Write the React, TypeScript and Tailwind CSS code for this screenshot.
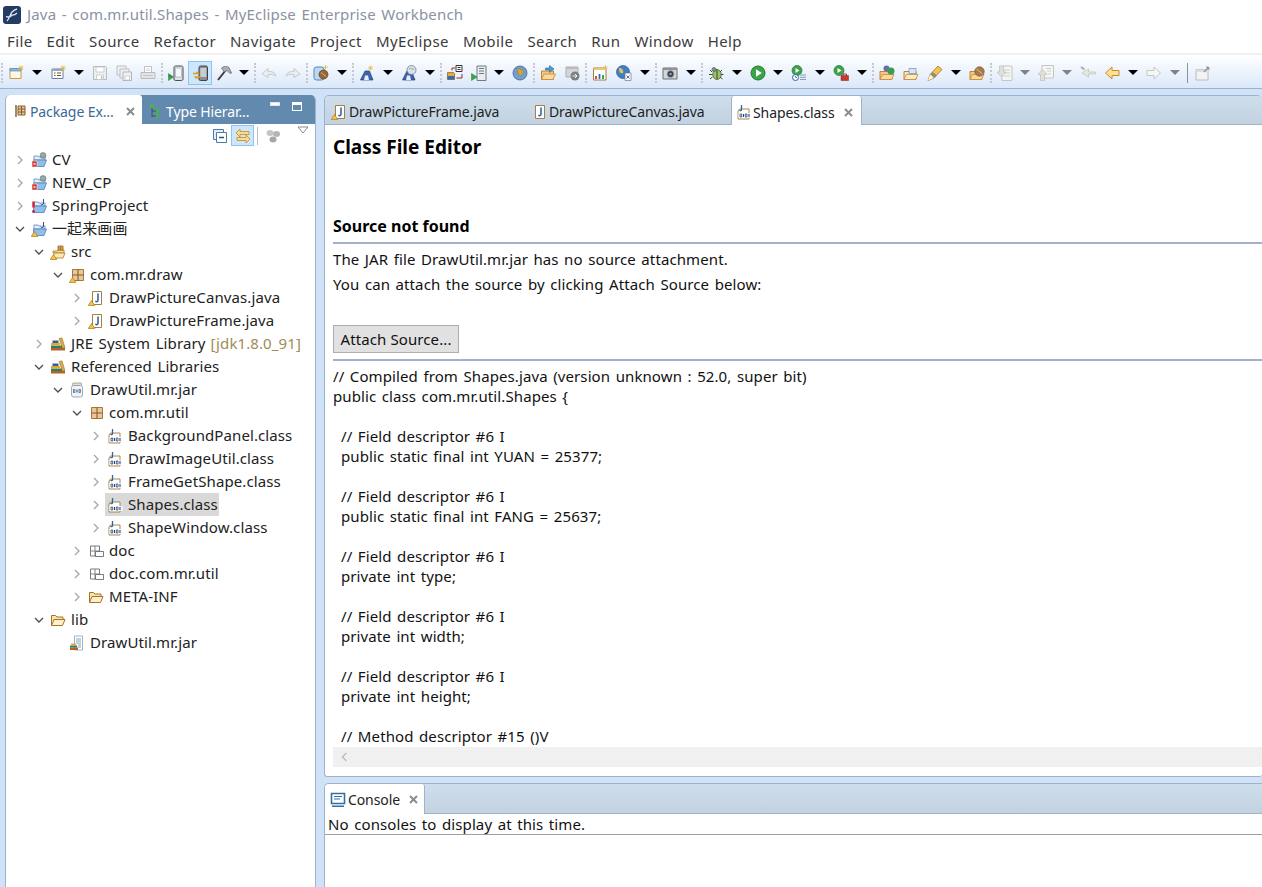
import React from "react";

const Svg = ({ children, className = "" }: { children: React.ReactNode; className?: string }) => (
  <svg viewBox="0 0 16 16" className={`w-4 h-4 shrink-0 ${className}`} fill="none">{children}</svg>
);

const Warn = () => <path d="M3.5 10.5 L6.8 15.5 H0.2 Z" fill="#f5c542" stroke="#b07a1c" strokeWidth="0.7" />;
const Err = () => <path d="M1 9h5v6H1z" fill="#d9342b" stroke="#fff" strokeWidth="0.5" />;

const OpenFolderBase = () => (
  <>
    <path d="M3 4h4l1 1h6v3H3z" fill="#e8eef8" stroke="#5b86b8" strokeWidth="0.8" />
    <path d="M2.500 8h13l-2.500 6.500H2.500z" fill="#8fc0ec" stroke="#4c7db5" strokeWidth="0.8" />
  </>
);
const ProjectWeb = () => (
  <Svg><OpenFolderBase /><circle cx="12" cy="3.5" r="3" fill="#6fa8d8" stroke="#8a6a2c" strokeWidth="0.5" /><path d="M10 3h4" stroke="#e0b040" strokeWidth="1" /><Err /><path d="M2.500 11l2 2m0-2l-2 2" stroke="#fff" strokeWidth="0.8" /></Svg>
);
const ProjectErr = () => (
  <Svg><OpenFolderBase /><path d="M12.500 1v5l-2 .8-1-1" stroke="#33528a" strokeWidth="1" /><path d="M2.500 3.500v6" stroke="#d9202a" strokeWidth="2.400" /><circle cx="2.500" cy="13.500" r="1.400" fill="#d9202a" /></Svg>
);
const ProjectWarn = () => (
  <Svg><OpenFolderBase /><path d="M12.500 1v5l-2 .8-1-1" stroke="#33528a" strokeWidth="1" /><Warn /></Svg>
);
const SrcFolder = () => (
  <Svg>
    <path d="M3 7h4l1-1h6v3H3z" fill="#f7dd9c" stroke="#ad7a22" strokeWidth="0.8" />
    <path d="M8 2h5v4H8z" fill="#f2bd6a" stroke="#8f5d1a" strokeWidth="0.8" />
    <path d="M10.500 2v4M8 4h5" stroke="#8f5d1a" strokeWidth="0.6" />
    <path d="M4 9h11l-2 5H3z" fill="#fbe9b8" stroke="#ad7a22" strokeWidth="0.8" /><Warn />
  </Svg>
);
const Pkg = ({ warn = false }: { warn?: boolean }) => (
  <Svg>
    <path d="M3.500 2.500h11v11h-11z" fill="#e9c79a" stroke="#a9773a" strokeWidth="1" />
    <path d="M9 2.500v11M3.500 8h11" stroke="#8c5c28" strokeWidth="1.100" />
    {warn && <Warn />}
  </Svg>
);
const JavaFile = ({ warn = false }: { warn?: boolean }) => (
  <Svg>
    <path d="M4.500 1.500h9v13h-9z" fill="#fff" stroke="#a3803f" strokeWidth="1" />
    <path d="M10 3.500v6.500c0 2-1.600 2-2.600 1.200" stroke="#2c5ba0" strokeWidth="1.500" />
    {warn && <Warn />}
  </Svg>
);
const ClassFile = () => (
  <Svg>
    <path d="M3.500 5h9.500v10h-11V7z" fill="#fff" stroke="#a57b3d" strokeWidth="0.900" />
    <path d="M5.500 1v4.500c0 1.300-1.200 1.300-2 .7" stroke="#33639c" strokeWidth="1.300" />
    <path d="M2.500 9.200h13v4.600h-13z" fill="#fff" />
    <path d="M4 10h1.700v3H4zM9.300 10h1.700v3H9.300z" stroke="#23467f" strokeWidth="0.800" />
    <path d="M7.500 10v3M13 10v3" stroke="#23467f" strokeWidth="1.100" />
  </Svg>
);
const JarIcon = () => (
  <Svg>
    <rect x="3.500" y="1" width="9" height="2.500" rx="1" fill="#e3ded2" stroke="#8d8774" strokeWidth="0.700" />
    <rect x="2.500" y="3.500" width="11" height="11.500" rx="2" fill="#eef3f7" stroke="#8c98a5" strokeWidth="0.800" />
    <path d="M4.500 7.500h1.400v3H4.500zM10 7.500h1.400v3H10z" stroke="#2f4d7c" strokeWidth="0.700" />
    <path d="M8 7.500v3" stroke="#2f4d7c" strokeWidth="1" />
  </Svg>
);
const Books = () => (
  <Svg>
    <path d="M1 12h14v2.500H1z" fill="#b3642a" />
    <path d="M1 9.500h11V12H1z" fill="#2d7f68" />
    <path d="M1 7h9v2.500H1z" fill="#e0a93a" />
    <path d="M9 2.500 L12 1.800 L15 11.800 L12.500 12.300z" fill="#d9ad45" stroke="#8a6520" strokeWidth="0.500" />
    <path d="M2.500 4.500h6V7h-6z" fill="#3b5c96" />
  </Svg>
);
const DocPkg = () => (
  <Svg>
    <path d="M2.500 3h9v10h-9z" fill="#fff" stroke="#77797b" strokeWidth="1" />
    <path d="M7 3v10M2.500 8h9" stroke="#77797b" strokeWidth="0.900" />
    <path d="M7.500 8.500h8v5h-8z" fill="#fff" stroke="#6a6c6e" strokeWidth="0.900" />
  </Svg>
);
const FolderIcon = () => (
  <Svg>
    <path d="M1.500 13.500V3.500h4l1.500 1.500h6v3" fill="#f8e3a8" stroke="#a8722a" strokeWidth="1" />
    <path d="M1.500 13.500 L4 7.500h11l-2.500 6z" fill="#fdf1cc" stroke="#a8722a" strokeWidth="1" />
  </Svg>
);
const JarFile = () => (
  <Svg>
    <path d="M5.500 1h8v14h-8z" fill="#fff" stroke="#8ba0b8" strokeWidth="0.800" />
    <path d="M7 4h5M7 6h5M7 8h5M9 10h3M9 12h3" stroke="#5e7fa8" strokeWidth="0.700" />
    <path d="M1 12.500h8V15H1z" fill="#b3642a" /><path d="M1 10.500h7v2H1z" fill="#2d7f68" /><path d="M2 8.500h5v2H2z" fill="#dfa93a" />
  </Svg>
);

/* ---------- toolbar icons ---------- */
const NewWin = () => <Svg><path d="M2 3.500h11v10H2z" fill="#fff8e4" stroke="#c99a44" strokeWidth="1" /><path d="M2 3.500h11v2.500H2z" fill="#8bb8e0" stroke="#5e8dbe" strokeWidth="0.700" /><path d="M13 .5v5M10.500 3h5M11 1l4 4M15 1l-4 4" stroke="#e7b93e" strokeWidth="0.800" /></Svg>;
const NewForm = () => <Svg><path d="M2 4h11v9.500H2z" fill="#fff" stroke="#6e7f95" strokeWidth="1" /><path d="M2 4h11v2H2z" fill="#8fa8c4" /><path d="M4 8h1.500M7 8h4M4 10.500h1.500M7 10.500h4" stroke="#7a4b20" strokeWidth="1" /><path d="M13 .5v5M10.500 3h5M11 1l4 4M15 1l-4 4" stroke="#e7b93e" strokeWidth="0.800" /></Svg>;
const Save = () => <Svg><path d="M1.500 1.500h12l1 1v12h-13z" fill="#eef0f2" stroke="#b6babd" strokeWidth="1" /><path d="M4 2h8v5H4zM4.500 10h7v4.500h-7z" fill="#fff" stroke="#c0c3c6" strokeWidth="0.800" /><path d="M9 11h1.500v3H9z" fill="#c0c3c6" /></Svg>;
const SaveAll = () => <Svg><path d="M1 1h9v9H1z" fill="#f0f1f2" stroke="#bbbec1" /><path d="M4 4h9v9H4z" fill="#f0f1f2" stroke="#bbbec1" /><path d="M7 7h8.500v8.500H7z" fill="#f0f1f2" stroke="#b2b6b9" /><path d="M9 11h4.500v4H9z" fill="#fff" stroke="#bbbec1" strokeWidth="0.700" /></Svg>;
const Print = () => <Svg><path d="M4.500 1.500h7v6h-7z" fill="#fff" stroke="#bfc1c3" /><path d="M1 7.500h14v6H1z" fill="#e3e3e3" stroke="#b9bbbd" /><path d="M3 10.500h10" stroke="#c6c8ca" /><path d="M6 4h4M6 5.500h4" stroke="#c9cbcd" strokeWidth="0.700" /></Svg>;
const Phone = () => <Svg><rect x="6" y="1" width="9" height="14.500" rx="1.500" fill="#dfe4ea" stroke="#4a4d52" strokeWidth="1" /><rect x="7.300" y="3" width="6.400" height="9" fill="#f4f7fb" stroke="#8d949d" strokeWidth="0.500" /><path d="M.5 8.500v7l5-3.500z" fill="#42a04a" stroke="#2a7c33" strokeWidth="0.500" /><path d="M.5 11h3" stroke="#2a7c33" /></Svg>;
const PhoneSync = () => <Svg><rect x="7" y="1" width="8.500" height="14.500" rx="1.500" fill="#8a8d92" stroke="#3f4247" strokeWidth="1" /><rect x="8.300" y="3" width="6" height="9" fill="#c8cdd4" /><path d="M1 8.500h5l-1.500-1.800M9 12H3.500L5 13.800" stroke="#e0a020" strokeWidth="1.600" /></Svg>;
const Hammer = () => <Svg><path d="M2 15 L9.500 5.500" stroke="#3a3c40" strokeWidth="2" /><path d="M5.500 3 C8 .8 11 1.300 13 2.500 L15.500 8 L14 8.500 L11 5.500 L8.500 7 Z" fill="#a9aeb4" stroke="#5c6066" strokeWidth="0.700" /></Svg>;
const Undo = () => <Svg><path d="M1 9 L7 3.500v3 C11 6.500 14 7 15 11 C13 9.500 10.500 9 7 9.500v3z" fill="#eceef0" stroke="#c0c4c8" strokeWidth="0.900" /></Svg>;
const Redo = () => <Svg><path d="M15 9 L9 3.500v3 C5 6.500 2 7 1 11 C3 9.500 5.500 9 9 9.500v3z" fill="#eceef0" stroke="#c0c4c8" strokeWidth="0.900" /></Svg>;
const Bean = () => <Svg><rect x="1" y="2" width="10" height="13" rx="2.500" fill="#bcd8f2" stroke="#4f86bd" strokeWidth="1" /><circle cx="10.500" cy="9.500" r="4.500" fill="#9a6636" stroke="#5d3a18" strokeWidth="0.700" /><path d="M8 7.500l5 4" stroke="#d6ad7c" /><path d="M12.500 0v4.500M10.500 2.200h4.500" stroke="#e7b93e" strokeWidth="0.800" /></Svg>;
const Arch = () => <Svg><path d="M1.500 15 L6 6 L10.500 6 L14 15z" fill="#3e63ad" stroke="#243f7a" strokeWidth="0.700" /><path d="M6 10.500h3l1 4.500H5z" fill="#e3eefa" /><path d="M11.500 .5v5M9 3h5M9.700 1.200l3.600 3.600M13.300 1.200l-3.600 3.600" stroke="#e7b93e" strokeWidth="0.700" /></Svg>;
const ArchGlobe = () => <Svg><path d="M1.500 15 L6 6 L10.500 6 L14 15z" fill="#3e63ad" stroke="#243f7a" strokeWidth="0.700" /><path d="M6 10.500h3l1 4.500H5z" fill="#e3eefa" /><circle cx="10.500" cy="5" r="4.500" fill="#d0e4f6" stroke="#6a6f78" strokeWidth="0.700" /><path d="M8 4c2-1.500 3 1 5 0" stroke="#caa233" /></Svg>;
const Deploy = () => <Svg><path d="M9 .5h6v6H9z" fill="#fff" stroke="#2e3338" /><path d="M10.500 2.500h3M10.500 4.500h3" stroke="#2e3338" /><path d="M.5 7.500h6l1 1v6H.5z" fill="#e8ab38" stroke="#8a5f14" strokeWidth="0.700" /><path d="M.5 11h7v3.500H.5z" fill="#3b6aa8" /><path d="M5 5.500V3h3M15 9v4H9.500" stroke="#8c2c2c" strokeWidth="1" /></Svg>;
const Server = () => <Svg><path d="M6 1h9v14.500H6z" fill="#e9edf0" stroke="#6f7a85" /><path d="M8 3.500h5M8 6h5M8 8.500h5" stroke="#6f7a85" strokeWidth="1.200" /><path d="M.5 8.500v7L6 12z" fill="#3ea24a" stroke="#2a7c33" strokeWidth="0.500" /></Svg>;
const Globe = () => <Svg><circle cx="8" cy="8" r="7" fill="#6f9fd4" stroke="#425f8f" strokeWidth="0.800" /><path d="M5 3c2 1 6 1 7 4-1 2-2 1-3 5-2-2-4-4-4-9z" fill="#d2a63c" stroke="#8a5f14" strokeWidth="0.400" /></Svg>;
const OpenFolderBlue = () => <Svg><path d="M1.500 14.500V6h12v8.500z" fill="#f6c886" stroke="#b57a2a" strokeWidth="0.900" /><path d="M1.500 14.500 L4 9h11.500l-2.500 5.500z" fill="#fbd89c" stroke="#c58a3a" strokeWidth="0.800" /><path d="M5.500 5V3h4V.5L14 4l-4.500 3.500V5z" fill="#4b9ad2" stroke="#2d6b9c" strokeWidth="0.600" /></Svg>;
const Undeploy = () => <Svg><path d="M2 2h12v10H2z" fill="#d5d6d8" stroke="#aeb0b2" /><path d="M2 2h12v2H2z" fill="#b9bbbe" /><circle cx="11" cy="11" r="4.500" fill="#7d8083" /><path d="M8.500 11h4.500m-2-2l2 2-2 2" stroke="#fff" strokeWidth="0.900" /></Svg>;
const Chart = () => <Svg><path d="M1.500 3h12.500v12H1.500z" fill="#fff" stroke="#a08040" /><path d="M1.500 3H14v2H1.500z" fill="#e8c77a" /><path d="M4 14v-3" stroke="#cc3c2a" strokeWidth="1.800" /><path d="M7.500 14v-5" stroke="#2a70c0" strokeWidth="1.800" /><path d="M11 14v-4" stroke="#2e9c44" strokeWidth="1.800" /><path d="M13.500 0v4.500M11.300 2.200h4.500" stroke="#e7b93e" strokeWidth="0.800" /></Svg>;
const GlobeDoc = () => <Svg><circle cx="7" cy="7" r="6.500" fill="#3f7fc4" stroke="#355a8c" strokeWidth="0.700" /><path d="M3 3c3 0 5 2 4 5-2 1-4 0-4-5z" fill="#e3c05c" /><path d="M9 8h6v7.500H9z" fill="#fff" stroke="#6f7a85" strokeWidth="0.700" /><path d="M10.500 10.500l3 3m0-3l-3 3" stroke="#3f5e96" strokeWidth="0.900" /></Svg>;
const Camera = () => <Svg><path d="M1 3h14v11H1z" fill="#d5d6d8" stroke="#6d7074" /><path d="M1 3h14v2H1z" fill="#8e9195" /><circle cx="8.500" cy="9" r="3.500" fill="#3a3d42" stroke="#a4a7aa" /><circle cx="8.500" cy="9" r="1.300" fill="#7ba6cc" /></Svg>;
const Bug = () => <Svg><ellipse cx="9" cy="9.500" rx="4.200" ry="5" fill="#9ec26c" stroke="#48601f" strokeWidth="0.800" /><circle cx="6" cy="4.500" r="2" fill="#6ea0a0" stroke="#344" strokeWidth="0.600" /><path d="M2 5l2 2M1 9.500h3.500M2 14l2.500-2M14 5l-2 2M15.500 9.500H13M14.500 14l-2.500-2M9 5v9" stroke="#2f3a1d" strokeWidth="0.900" /></Svg>;
const Run = () => <Svg><circle cx="8" cy="8" r="7" fill="#3da34a" stroke="#217a30" strokeWidth="1" /><path d="M6 4.200v7.600l5.800-3.800z" fill="#fff" /></Svg>;
const RunHist = () => <Svg><circle cx="6" cy="5.500" r="5" fill="#3da34a" stroke="#217a30" strokeWidth="0.700" /><path d="M4.500 3v5L8.500 5.500z" fill="#fff" /><circle cx="4.500" cy="12.500" r="3" fill="#fff" stroke="#2d5fa8" /><path d="M4.500 10.800v1.700h1.500" stroke="#2d5fa8" strokeWidth="0.800" /><path d="M9 10h6M9 12.300h6M9 14.500h6" stroke="#7f93ad" strokeWidth="0.900" /></Svg>;
const RunTool = () => <Svg><circle cx="6" cy="5.500" r="5" fill="#3da34a" stroke="#217a30" strokeWidth="0.700" /><path d="M4.500 3v5L8.500 5.500z" fill="#fff" /><path d="M8 10.500h7.500v5H8z" fill="#c9382c" stroke="#8a221a" strokeWidth="0.500" /><path d="M10 10.500V9h3.500v1.500" stroke="#6a1d17" strokeWidth="0.800" /></Svg>;
const FolderGreen = () => <Svg><path d="M1 14.500V6.500h12v8z" fill="#f6c886" stroke="#b57a2a" strokeWidth="0.900" /><path d="M1 14.500 L3.500 9.500H15l-2.500 5z" fill="#fbd89c" stroke="#c58a3a" strokeWidth="0.800" /><circle cx="7.500" cy="3.500" r="3" fill="#6272a8" /><circle cx="12" cy="6" r="3.500" fill="#3d9a50" /></Svg>;
const FolderWin = () => <Svg><path d="M1 14.500V6.500h12v8z" fill="#f6e2bc" stroke="#b57a2a" strokeWidth="0.900" /><path d="M1 14.500 L3.500 9.500H15l-2.500 5z" fill="#fbeac8" stroke="#c58a3a" strokeWidth="0.800" /><path d="M6 3.500h7v5H6z" fill="#d8e6f4" stroke="#7d98b8" strokeWidth="0.800" /></Svg>;
const Pen = () => <Svg><path d="M1 15.500l2-6 8-8.500 4 3.500L7 13z" fill="#f5c24f" stroke="#a8722a" strokeWidth="0.800" /><path d="M6 7l4 3.500L7.500 13 3.500 9.500z" fill="#8a8d91" /><path d="M1 15.500l2-6 3.500 3.500z" fill="#fff6d8" /></Svg>;
const FolderBean = () => <Svg><path d="M1 14.500V6.500h12v8z" fill="#f6c886" stroke="#b57a2a" strokeWidth="0.900" /><path d="M1 14.500 L3.500 9.500H15l-2.500 5z" fill="#fbd89c" stroke="#c58a3a" strokeWidth="0.800" /><circle cx="10.500" cy="6.500" r="4.700" fill="#a97a4a" stroke="#6a4620" strokeWidth="0.600" /><path d="M7.500 4l6 5" stroke="#dcbf94" /></Svg>;
const NextAnn = () => <Svg><path d="M5 1h10v14.500H5z" fill="#f5f6f4" stroke="#c3c6c2" /><path d="M7 5h6M7 8h6M7 11h6" stroke="#ccd0cc" /><path d="M2.500 1h4v6h2.500L4.500 12 0 7h2.500z" fill="#e0e0d8" stroke="#bcbfb8" strokeWidth="0.700" /></Svg>;
const PrevAnn = () => <Svg><path d="M4 .5h11.500V13H4z" fill="#f5f6f4" stroke="#c3c6c2" /><path d="M8 3.500h5M9 6h4M10 9h3" stroke="#ccd0cc" /><path d="M2.500 15.500h4v-6H9L4.500 4.500 0 9.500h2.500z" fill="#e0e0d8" stroke="#bcbfb8" strokeWidth="0.700" /></Svg>;
const LastEdit = () => <Svg><path d="M15.500 9H8.500v3L2 8l6.500-4v3h7z" fill="#e6e9e0" stroke="#bcc0b8" strokeWidth="0.700" /><path d="M1 2l3.500 2.500" stroke="#a4a6aa" strokeWidth="1.600" /></Svg>;
const BackA = () => <Svg><path d="M15 5.500H8V2L1.500 8 8 14v-3.500h7z" fill="#fbe29c" stroke="#cf8a1a" strokeWidth="1" /></Svg>;
const FwdA = () => <Svg><path d="M1 5.500h7V2l6.500 6L8 14v-3.500H1z" fill="#f6f6f4" stroke="#c6c8c4" strokeWidth="1" /></Svg>;
const PerspNew = () => <Svg><path d="M1 4.500h12V15H1z" fill="#f2f3f4" stroke="#b8babd" /><path d="M1 4.500h12V7H1z" fill="#dcdee0" /><path d="M9 7l5-5M11.500 1.500l3 3" stroke="#8f9296" strokeWidth="1.300" /></Svg>;

const ToolIcon = ({ children, active = false }: { children: React.ReactNode; active?: boolean }) => (
  <span className={`w-[24px] h-[24px] flex items-center justify-center shrink-0 ${active ? "bg-[#cde6fb] border border-[#8ec4ee]" : ""}`}>{children}</span>
);
const Arrow = ({ dim = false }: { dim?: boolean }) => (
  <span className="w-[17.75px] flex items-center justify-center shrink-0">
    <span className={`w-0 h-0 border-l-[5px] border-r-[5px] border-t-[5px] border-l-transparent border-r-transparent ${dim ? "border-t-[#7f8286]" : "border-t-black"}`} />
  </span>
);
const Sep = () => (
  <span className="w-[4px] h-[20px] shrink-0 flex justify-center">
    <span className="w-0 h-full border-l-2 border-dotted border-[#c4c9cf]" />
  </span>
);

const Toolbar = () => (
  <div className="h-[36px] shrink-0 flex items-center pt-[2px] border-b border-[#9db3cb] bg-gradient-to-b from-[#ffffff] to-[#dbe8fa] border-t-2 border-t-[#f0f0f0]">
    <Sep /><ToolIcon><NewWin /></ToolIcon><Arrow /><ToolIcon><NewForm /></ToolIcon><Arrow />
    <ToolIcon><Save /></ToolIcon><ToolIcon><SaveAll /></ToolIcon><ToolIcon><Print /></ToolIcon><Sep />
    <ToolIcon><Phone /></ToolIcon><ToolIcon active><PhoneSync /></ToolIcon><ToolIcon><Hammer /></ToolIcon><Arrow /><Sep />
    <ToolIcon><Undo /></ToolIcon><ToolIcon><Redo /></ToolIcon><Sep />
    <ToolIcon><Bean /></ToolIcon><Arrow /><Sep />
    <ToolIcon><Arch /></ToolIcon><Arrow /><ToolIcon><ArchGlobe /></ToolIcon><Arrow /><Sep />
    <ToolIcon><Deploy /></ToolIcon><ToolIcon><Server /></ToolIcon><Arrow /><ToolIcon><Globe /></ToolIcon><Sep />
    <ToolIcon><OpenFolderBlue /></ToolIcon><ToolIcon><Undeploy /></ToolIcon><Sep />
    <ToolIcon><Chart /></ToolIcon><ToolIcon><GlobeDoc /></ToolIcon><Arrow /><Sep />
    <ToolIcon><Camera /></ToolIcon><Arrow /><Sep />
    <ToolIcon><Bug /></ToolIcon><Arrow /><ToolIcon><Run /></ToolIcon><Arrow /><ToolIcon><RunHist /></ToolIcon><Arrow /><ToolIcon><RunTool /></ToolIcon><Arrow /><Sep />
    <ToolIcon><FolderGreen /></ToolIcon><ToolIcon><FolderWin /></ToolIcon><ToolIcon><Pen /></ToolIcon><Arrow /><ToolIcon><FolderBean /></ToolIcon><Sep />
    <ToolIcon><NextAnn /></ToolIcon><Arrow dim /><ToolIcon><PrevAnn /></ToolIcon><Arrow dim /><ToolIcon><LastEdit /></ToolIcon><ToolIcon><BackA /></ToolIcon><Arrow /><ToolIcon><FwdA /></ToolIcon><Arrow dim />
    <span className="w-px h-[20px] bg-[#8f8f96] mx-[3px] shrink-0" />
    <ToolIcon><PerspNew /></ToolIcon>
  </div>
);

const Chevron = ({ open }: { open?: boolean }) => (
  <svg viewBox="0 0 10 10" className="w-[10px] h-[10px] shrink-0">
    {open ? <path d="M1 3l4 4 4-4" fill="none" stroke="#4d4d4d" strokeWidth="1.300" /> : <path d="M3 1l4 4-4 4" fill="none" stroke="#a6a6a6" strokeWidth="1.300" />}
  </svg>
);

type Row = { depth: 0 | 1 | 2 | 3 | 4; exp?: "open" | "closed"; icon: React.ReactNode; label: string; extra?: string; selected?: boolean };

const depthClass = { 0: "pl-[9px]", 1: "pl-[28px]", 2: "pl-[47px]", 3: "pl-[66px]", 4: "pl-[85px]" };

const rows: Row[] = [
  { depth: 0, exp: "closed", icon: <ProjectWeb />, label: "CV" },
  { depth: 0, exp: "closed", icon: <ProjectWeb />, label: "NEW_CP" },
  { depth: 0, exp: "closed", icon: <ProjectErr />, label: "SpringProject" },
  { depth: 0, exp: "open", icon: <ProjectWarn />, label: "一起来画画" },
  { depth: 1, exp: "open", icon: <SrcFolder />, label: "src" },
  { depth: 2, exp: "open", icon: <Pkg warn />, label: "com.mr.draw" },
  { depth: 3, exp: "closed", icon: <JavaFile warn />, label: "DrawPictureCanvas.java" },
  { depth: 3, exp: "closed", icon: <JavaFile warn />, label: "DrawPictureFrame.java" },
  { depth: 1, exp: "closed", icon: <Books />, label: "JRE System Library", extra: "[jdk1.8.0_91]" },
  { depth: 1, exp: "open", icon: <Books />, label: "Referenced Libraries" },
  { depth: 2, exp: "open", icon: <JarIcon />, label: "DrawUtil.mr.jar" },
  { depth: 3, exp: "open", icon: <Pkg />, label: "com.mr.util" },
  { depth: 4, exp: "closed", icon: <ClassFile />, label: "BackgroundPanel.class" },
  { depth: 4, exp: "closed", icon: <ClassFile />, label: "DrawImageUtil.class" },
  { depth: 4, exp: "closed", icon: <ClassFile />, label: "FrameGetShape.class" },
  { depth: 4, exp: "closed", icon: <ClassFile />, label: "Shapes.class", selected: true },
  { depth: 4, exp: "closed", icon: <ClassFile />, label: "ShapeWindow.class" },
  { depth: 3, exp: "closed", icon: <DocPkg />, label: "doc" },
  { depth: 3, exp: "closed", icon: <DocPkg />, label: "doc.com.mr.util" },
  { depth: 3, exp: "closed", icon: <FolderIcon />, label: "META-INF" },
  { depth: 1, exp: "open", icon: <FolderIcon />, label: "lib" },
  { depth: 2, icon: <JarFile />, label: "DrawUtil.mr.jar" },
];

const CloseX = () => (
  <svg viewBox="0 0 9 9" className="w-[9px] h-[9px] shrink-0">
    <path d="M1 1l7 7M8 1L1 8" stroke="#8c8c8c" strokeWidth="2" />
  </svg>
);

const tabText = "text-[14px] tracking-[-0.1px] [word-spacing:0px] whitespace-nowrap";

const LeftPanel = () => (
  <div className="w-[311px] ml-[5px] shrink-0 flex flex-col bg-white border-x border-[#9fb2c7] rounded-t-[5px] overflow-hidden">
    <div className="h-[29px] flex shrink-0 bg-[#6289ae]">
      <div className="w-[136px] bg-white rounded-tr-[3px] flex items-center pl-[7px] pt-[3px] shrink-0">
        <svg viewBox="0 0 16 16" className="w-4 h-4 shrink-0"><path d="M3 2v12" stroke="#7b5a2a" strokeWidth="1.400" /><path d="M5 3h7v9H5z" fill="#e9c79a" stroke="#8c5c28" /><path d="M5 6h7M5 9h7M8.500 3v9" stroke="#8c5c28" /></svg>
        <span className={`ml-[1px] text-[#3a6a98] ${tabText}`}>Package Ex...</span>
        <span className="ml-[12px]"><CloseX /></span>
      </div>
      <div className="flex-1 flex items-center pl-[6px] pt-[3px] text-white relative">
        <svg viewBox="0 0 16 16" className="w-4 h-4 shrink-0"><path d="M4 2v12" stroke="#3d4f60" /><circle cx="4" cy="3" r="2.300" fill="#4caf50" /><circle cx="9" cy="8" r="2.300" fill="#4caf50" /><circle cx="9" cy="13" r="2.300" fill="#4caf50" /><path d="M4 8h4M4 13h4" stroke="#3d4f60" /></svg>
        <span className={`ml-[2px] ${tabText}`}>Type Hierar...</span>
        <div className="absolute top-[7px] right-[13px] flex gap-[12px] items-start">
          <span className="w-[10px] h-[4px] border border-[#dbe5ef] bg-white" />
          <span className="w-[10px] h-[9px] border border-white border-t-[3px]" />
        </div>
      </div>
    </div>
    <div className="h-[23px] shrink-0 flex items-center justify-end pr-[6px]">
      <svg viewBox="0 0 16 16" className="w-4 h-4 shrink-0"><path d="M1.500 1.500h10v10h-10z" fill="#e2edf7" stroke="#4d7ba8" /><path d="M4.500 4.500h10v10h-10z" fill="#fff" stroke="#4d7ba8" /><path d="M7 9.500h5" stroke="#33557a" strokeWidth="1.300" /></svg>
      <span className="ml-[3px] w-[23px] h-[21px] bg-[#cde6fb] border border-[#8ec4ee] flex items-center justify-center">
        <svg viewBox="0 0 16 16" className="w-4 h-4"><path d="M1 5l4-4v2.500h9v3H5V9zM15 11l-4-4v2.500H2v3h9V15z" fill="#f8dc94" stroke="#c58a1a" strokeWidth="0.800" /></svg>
      </span>
      <span className="ml-[3px] w-px h-[18px] bg-[#b8bcc0]" />
      <svg viewBox="0 0 16 16" className="w-4 h-4 ml-[7px] shrink-0"><ellipse cx="5" cy="5" rx="3.500" ry="3" fill="#c3c5c7" /><ellipse cx="11.500" cy="6" rx="3.500" ry="3" fill="#b3b5b7" /><ellipse cx="8" cy="11.500" rx="3.500" ry="3" fill="#a5a7a9" /></svg>
      <svg viewBox="0 0 12 8" className="w-[12px] h-[8px] ml-[16px] mb-[12px] shrink-0"><path d="M1 1h10L6 7z" fill="#fff" stroke="#8a8a8a" /></svg>
    </div>
    <div className="flex flex-col pt-px">
      {rows.map((r, i) => (
        <div key={i} className={`h-[23px] flex items-center ${depthClass[r.depth]}`}>
          <span className="w-[10px] shrink-0">{r.exp && <Chevron open={r.exp === "open"} />}</span>
          <span className={`flex items-center h-full ml-[4px] pl-[2px] pr-px ${r.selected ? "bg-[#d9d9d9]" : ""}`}>
            {r.icon}
            <span className="ml-[5px] whitespace-nowrap text-[#222]">{r.label}</span>
          </span>
          {r.extra && <span className="ml-[4px] whitespace-nowrap text-[#a08c56]">{r.extra}</span>}
        </div>
      ))}
    </div>
  </div>
);

const code: [string, boolean][] = [
  ["// Compiled from Shapes.java (version unknown : 52.0, super bit)", false],
  ["public class com.mr.util.Shapes {", false],
  ["", false],
  ["// Field descriptor #6 I", true],
  ["public static final int YUAN = 25377;", true],
  ["", false],
  ["// Field descriptor #6 I", true],
  ["public static final int FANG = 25637;", true],
  ["", false],
  ["// Field descriptor #6 I", true],
  ["private int type;", true],
  ["", false],
  ["// Field descriptor #6 I", true],
  ["private int width;", true],
  ["", false],
  ["// Field descriptor #6 I", true],
  ["private int height;", true],
  ["", false],
  ["// Method descriptor #15 ()V", true],
];

const EditorTab = ({ icon, label }: { icon: React.ReactNode; label: string }) => (
  <div className="flex items-center text-[#222]">
    {icon}<span className={`ml-[2px] ${tabText}`}>{label}</span>
  </div>
);

const Editor = () => (
  <div className="h-[682px] shrink-0 flex flex-col bg-white border border-r-0 border-[#9fb2c7] rounded-t-[5px] rounded-b-[3px] overflow-hidden">
    <div className="h-[29px] shrink-0 flex items-stretch bg-gradient-to-b from-[#cfdeec] to-[#c3d2e0] border-b border-[#9fb2c7]">
      <div className="w-[206px] pl-[6px] pt-[3px] flex items-center shrink-0"><EditorTab icon={<JavaFile warn />} label="DrawPictureFrame.java" /></div>
      <div className="w-[200px] pt-[3px] flex items-center shrink-0"><EditorTab icon={<JavaFile />} label="DrawPictureCanvas.java" /></div>
      <div className="w-[131px] -mb-px bg-white border-x border-[#9fb2c7] rounded-t-[3px] flex items-center pl-[4px] pt-[3px] shrink-0">
        <ClassFile /><span className={`ml-[1px] text-[#222] ${tabText}`}>Shapes.class</span>
        <span className="ml-[9px]"><CloseX /></span>
      </div>
    </div>
    <div className="flex-1 flex flex-col pl-[8px] text-[#111] min-h-0">
      <div className="font-bold text-[19px] leading-[24px] mt-[10px] h-[24px] text-black tracking-normal [word-spacing:0px]">Class File Editor</div>
      <div className="font-bold text-[16px] leading-[22px] mt-[56px] h-[22px] text-black tracking-normal [word-spacing:0px]">Source not found</div>
      <div className="h-[2px] bg-[#a2b1c9] mt-[5px]" />
      <div className="leading-[20px] mt-[5px]">The JAR file DrawUtil.mr.jar has no source attachment.</div>
      <div className="leading-[20px] mt-[5px]">You can attach the source by clicking Attach Source below:</div>
      <button className="w-[126px] h-[28px] mt-[31px] bg-[#e1e1e1] border border-[#adadad] text-[#111] text-center">Attach Source...</button>
      <div className="h-[2px] bg-[#a2b1c9] mt-[6px]" />
      <div className="h-[386px] pt-[5px] overflow-hidden">
        {code.map(([l, indent], i) => (
          <div key={i} className={`h-[20px] leading-[20px] whitespace-pre text-[#111] ${indent ? "pl-[8px]" : ""}`}>{l}</div>
        ))}
      </div>
      <div className="h-[20px] shrink-0 bg-[#f0f0f0] flex items-center pl-[7px]">
        <svg viewBox="0 0 10 12" className="w-[8px] h-[10px]"><path d="M8 1L3 6l5 5" fill="none" stroke="#bdbdbd" strokeWidth="1.800" /></svg>
      </div>
    </div>
  </div>
);

const ConsolePanel = () => (
  <div className="flex-1 mt-[6px] flex flex-col bg-white border-l border-t border-[#9fb2c7] rounded-tl-[5px] overflow-hidden">
    <div className="h-[30px] shrink-0 flex bg-gradient-to-b from-[#cfdeec] to-[#c3d2e0] border-b border-[#9fb2c7]">
      <div className="w-[100px] -mb-px bg-white border-r border-[#9fb2c7] rounded-t-[3px] flex items-center pl-[5px] pt-px">
        <svg viewBox="0 0 16 16" className="w-4 h-4 shrink-0"><path d="M1.500 1.500h13v10h-13z" fill="#fff" stroke="#2f6ea8" strokeWidth="1.600" /><path d="M4 4.500h8M4 7h6" stroke="#2f6ea8" /><path d="M2 13.500h12v1.500H2z" fill="#2f6ea8" /></svg>
        <span className={`ml-[2px] text-[#222] ${tabText}`}>Console</span>
        <span className="ml-[9px]"><CloseX /></span>
      </div>
    </div>
    <div className="pl-[3px] h-[21px] leading-[21px] border-b border-[#a0a0a0] text-[#111] whitespace-nowrap">No consoles to display at this time.</div>
  </div>
);

export default function App() {
  return (
    <div className="w-[1262px] h-[887px] overflow-hidden flex flex-col bg-white text-[15px] tracking-[0.1px] [word-spacing:1.5px] font-['Noto_Sans','Noto_Sans_CJK_SC',sans-serif]">
      <div className="h-[29px] shrink-0 flex items-center pl-[3px]">
        <svg viewBox="0 0 18 18" className="w-[18px] h-[18px] shrink-0">
          <rect width="18" height="18" rx="3" fill="#233c63" />
          <path d="M4 15C7 12 7 8 9 6c1.500-1.500 3-2.500 5-3M7 8.500C9 9.500 12 9 14 7M3 10.500c2 1 4 .5 6-1" fill="none" stroke="#dfe7f2" strokeWidth="1.300" />
        </svg>
        <span className="ml-[6px] text-[#8a92a3] whitespace-nowrap tracking-[0.17px]">Java - com.mr.util.Shapes - MyEclipse Enterprise Workbench</span>
      </div>
      <div className="h-[24px] shrink-0 flex items-center text-[#3b3b3b] pl-[7px] gap-[14px] whitespace-nowrap tracking-[0.4px]">
        {["File", "Edit", "Source", "Refactor", "Navigate", "Project", "MyEclipse", "Mobile", "Search", "Run", "Window", "Help"].map((m) => (
          <span key={m}>{m}</span>
        ))}
      </div>
      <Toolbar />
      <div className="flex-1 min-h-0 flex bg-[#cfe2f8] pt-[6px]">
        <LeftPanel />
        <div className="flex-1 min-w-0 ml-[8px] flex flex-col">
          <Editor />
          <ConsolePanel />
        </div>
      </div>
    </div>
  );
}
